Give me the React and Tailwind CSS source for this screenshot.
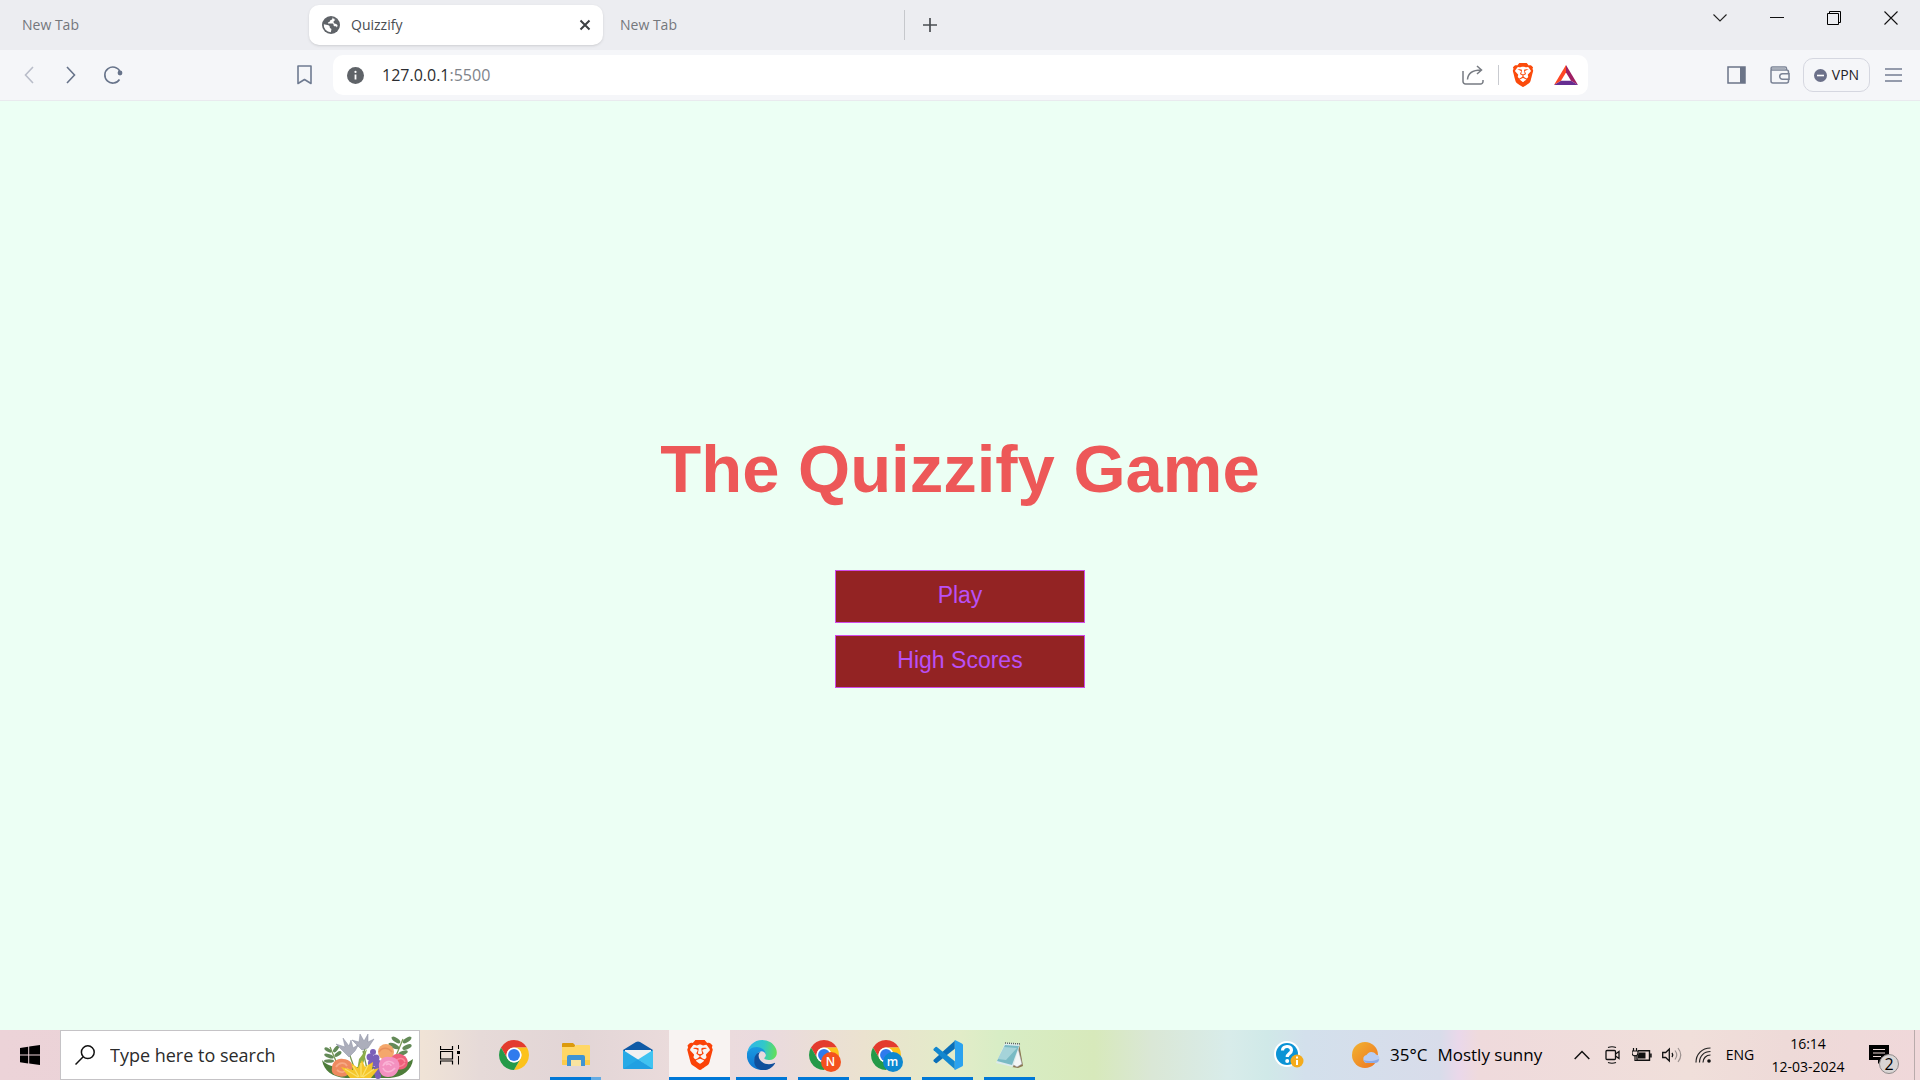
import React from "react";
import { SiBrave } from "react-icons/si";

function Svg({ w, h, vb, children, className }) {
  return (
    <svg width={w} height={h} viewBox={vb || `0 0 ${w} ${h}`} fill="none" className={className} aria-hidden="true">
      {children}
    </svg>
  );
}

/* ---------- Browser icons ---------- */

const Globe = () => (
  <Svg w={18} h={18}>
    <circle cx="9" cy="9" r="9" fill="#5f6368" />
    <path
      d="M10.4 1.6c.3 1.3-.2 2.2-1.4 2.3-.9.1-1.1.5-1.1 1.2 0 .8-.6 1.1-1.4 1.2-.8.1-.8.7-.3 1.3h3.9c1.1 0 1.5.7 1.5 1.7 0 .9.5 1 1.3 1 1.1 0 1.7.4 2 1.3A7.2 7.2 0 0 0 10.4 1.6Z"
      fill="#fff"
    />
    <path d="M10.4 1.6a7.4 7.4 0 0 1 5.9 8l-2.200-1.7-2.3-.7-.3-1.8 1.6-1.5Z" fill="#5f6368" />
    <path d="M1.8 8.2 5.5 9.1c1.4.3 2.3 1 2.3 2.1 0 .8.3 1.1 1 1.3.6.2.7.7.5 1.6l-.5 2.2a7.2 7.2 0 0 1-7-8.1Z" fill="#fff" />
  </Svg>
);

const Close = () => (
  <Svg w={12} h={12}>
    <path d="m1.5 1.5 9 9m0-9-9 9" stroke="#3c4043" strokeWidth="2" />
  </Svg>
);

const Plus = () => (
  <Svg w={16} h={16}>
    <path d="M8 1v14M1 8h14" stroke="#4a4d52" strokeWidth="1.7" />
  </Svg>
);

const Chevron = () => (
  <Svg w={14} h={8}>
    <path d="m.5.5 6.5 6.5L13.5.5" stroke="#222" strokeWidth="1.1" />
  </Svg>
);

const Minimize = () => (
  <Svg w={14} h={14}>
    <path d="M0 6.5h14" stroke="#111" />
  </Svg>
);

const Restore = () => (
  <Svg w={14} h={14}>
    <path d="M.5 2.5h11v11H.5zM2.5 2V.5h11v11H12" stroke="#000" />
  </Svg>
);

const WindowClose = () => (
  <Svg w={14} h={14}>
    <path d="m.5.5 13 13m0-13-13 13" stroke="#111" strokeWidth="1.1" />
  </Svg>
);

const Back = () => (
  <Svg w={10} h={18}>
    <path d="M9 1 1.5 9 9 17" stroke="#b9bdc9" strokeWidth="1.6" />
  </Svg>
);

const Forward = () => (
  <Svg w={10} h={18}>
    <path d="m1 1 7.5 8L1 17" stroke="#67738a" strokeWidth="1.6" />
  </Svg>
);

const Reload = () => (
  <Svg w={20} h={20}>
    <path d="M17 6.5A8 8 0 1 0 16.5 14.5" stroke="#67738a" strokeWidth="1.6" />
    <circle cx="17" cy="8" r="2.4" fill="#67738a" />
  </Svg>
);

const Bookmark = () => (
  <Svg w={15} h={20}>
    <path d="M1 1h13v17.500l-6.500-4-6.500 4Z" stroke="#6f7b91" strokeWidth="1.6" strokeLinejoin="round" />
  </Svg>
);

const Info = () => (
  <Svg w={17} h={17}>
    <circle cx="8.5" cy="8.5" r="8.5" fill="#5f6368" />
    <path d="M8.5 7.5v5" stroke="#fff" strokeWidth="1.8" />
    <circle cx="8.5" cy="4.9" r="1.1" fill="#fff" />
  </Svg>
);

const Share = () => (
  <Svg w={22} h={20}>
    <path d="M1 6v10.500A2.500 2.500 0 0 0 3.500 19h15a2.500 2.500 0 0 0 2.500-2.500V15" stroke="#777b82" strokeWidth="1.5" />
    <path d="M5.500 14.500C6 8 10 5 19 5m-4-4 4.500 4-4.500 4" stroke="#777b82" strokeWidth="1.5" />
  </Svg>
);

const Bat = () => (
  <Svg w={24} h={20}>
    <path d="M12 0 0 20l7-4.200 5-8.300Z" fill="#ff4724" />
    <path d="M12 0v7.500l5 8.300 7 4.200Z" fill="#9e1f63" />
    <path d="M0 20h24l-7-4.200H7Z" fill="#662d91" />
  </Svg>
);

const Sidebar = () => (
  <Svg w={19} h={18}>
    <path d="M1 1h17v16H1z" stroke="#6b7488" strokeWidth="1.5" />
    <path d="M13 1h5v16h-5z" fill="#6b7488" />
  </Svg>
);

const Wallet = () => (
  <Svg w={20} h={18}>
    <path
      d="M1 3.500V15a2 2 0 0 0 2 2h13.500a2 2 0 0 0 2-2V6a2 2 0 0 0-2-2H2.500C.6 4 .6 1 2.500 1H15a1.500 1.500 0 0 1 1.500 1.500V4"
      stroke="#7a8295"
      strokeWidth="1.500"
    />
    <path d="M2 2.500h13.500" stroke="#a9afbb" strokeWidth="2" />
    <path d="M19 7.700h-6.500a2.800 2.800 0 0 0 0 5.600H19z" fill="#f5f6f9" stroke="#7a8295" strokeWidth="1.500" />
  </Svg>
);

const VpnDot = () => (
  <Svg w={13} h={13}>
    <circle cx="6.5" cy="6.5" r="6.5" fill="#6b7089" />
    <path d="M3 6.5h7" stroke="#fff" strokeWidth="1.6" />
  </Svg>
);

const Menu = () => (
  <Svg w={17} h={14}>
    <path d="M0 1h17M0 7h17M0 13h17" stroke="#747d92" strokeWidth="1.4" />
  </Svg>
);

/* ---------- Taskbar icons ---------- */

const WindowsLogo = () => (
  <Svg w={20} h={20}>
    <path d="M0 2.9 8.2 1.700v7.800H0zM9.200 1.600 20 0v9.500H9.200zM0 10.500h8.200v7.900L0 17.200zM9.200 10.500H20V20L9.200 18.500z" fill="#000" />
  </Svg>
);

const Search = () => (
  <Svg w={20} h={20}>
    <circle cx="12.8" cy="7.2" r="6.4" stroke="#111" strokeWidth="1.5" />
    <path d="M8.2 11.8.5 19.5" stroke="#111" strokeWidth="1.5" />
  </Svg>
);

const Flowers = () => (
  <Svg w={94} h={46}>
    <path d="M1 27c2 11 10 17 24 18h44c13-1 22-8 23-19-8 6-16 8-24 8H25C15 35 6 33 1 27Z" fill="#4e7d3a" />
    <path d="M20 40 9 14m26 26L28 20m10 18L46 8m26 22L82 6M46 36l-4-18" stroke="#7c9b55" strokeWidth="1.300" />
    <g fill="#648a58">
      <ellipse cx="7" cy="17" rx="4" ry="1.800" transform="rotate(30 7 17)" />
      <ellipse cx="15" cy="16" rx="4" ry="1.800" transform="rotate(-50 15 16)" />
      <ellipse cx="8" cy="23" rx="5" ry="1.900" transform="rotate(20 8 23)" />
      <ellipse cx="17" cy="21" rx="4" ry="1.900" transform="rotate(-35 17 21)" />
      <ellipse cx="8" cy="28" rx="5" ry="1.800" />
      <ellipse cx="75" cy="7" rx="5" ry="2.200" transform="rotate(35 75 7)" />
      <ellipse cx="86" cy="7" rx="5" ry="2.200" transform="rotate(-35 86 7)" />
      <ellipse cx="73" cy="13" rx="6" ry="2.400" transform="rotate(25 73 13)" />
      <ellipse cx="86" cy="14" rx="5" ry="2.200" transform="rotate(-25 86 14)" />
      <ellipse cx="82" cy="20" rx="5" ry="2" transform="rotate(-20 82 20)" />
    </g>
    <g fill="#acaebb" stroke="#8b8ea3" strokeWidth=".5">
      <path d="M28 24 15 11l9 3-2-9 6 8 2-6 2 8 6-4-4 7Z" />
      <path d="M41 17 31 7l7 2 1-8 4 7 4-7v8l6-3-6 9Z" />
    </g>
    <path d="m36 38 2-12 8-10-3 12-4 10Z" fill="#8cae48" />
    <circle cx="65" cy="19" r="8" fill="#f4a76c" />
    <path d="M58 19c3-5 9-5 13 0" stroke="#e88f5c" strokeWidth="1.500" />
    <path d="M69 30c0-8 7-11 13-8 6 3 6 10 2 13-5 3-12 2-15-5Z" fill="#ef5f7b" />
    <path d="M75 28c3-4 8-3 9 1m-12 2c4 4 9 3 12-1" stroke="#f8899a" strokeWidth="1.500" />
    <path d="M11 35c0-6 5-10 11-9 7 0 11 5 9 11-2 5-8 8-14 6-5-1-7-4-6-8Z" fill="#ef8a5f" />
    <path d="M15 34c3-5 9-5 11-1m-10 4c4 4 9 2 11-2" stroke="#f7a985" strokeWidth="1.800" />
    <g fill="#7a5fb8">
      <circle cx="52" cy="19" r="3" />
      <circle cx="49" cy="24" r="3.500" />
      <circle cx="55" cy="25" r="3.500" />
      <circle cx="51" cy="30" r="4" />
      <circle cx="57" cy="31" r="4" />
      <circle cx="55" cy="38" r="4" />
      <circle cx="57" cy="43" r="3" />
    </g>
    <path d="M58 34c-1-6 4-11 10-10 7-1 12 5 10 11s-5 9-11 9-9-4-9-10Z" fill="#f391c0" />
    <path d="M62 33c2-5 8-6 11-2m-11 4c2 5 8 5 12 0m-9-3c2-2 5-1 5 1" stroke="#fab3d5" strokeWidth="1.700" />
    <path d="m20 34 12 3-2-7 7 5 4-8 3 7 8-5-1 8 7-2-8 10H29Z" fill="#f5c62a" />
    <path d="m24 36 13 8m-5-11 6 11m2-14v14m7-12-6 12m12-8-11 8" stroke="#fae06a" strokeWidth="1.300" />
  </Svg>
);

const TaskView = () => (
  <Svg w={20} h={20}>
    <path d="M.5 1v3.500h12V1M.5 19.500V16h12v3.500M.5 6.500h12v7.500H.5z" stroke="#000" strokeWidth="1.200" />
    <path d="M18.500 0v4M18.500 11v8.500" stroke="#000" />
    <path d="M17 6h3v3h-3z" fill="#000" />
  </Svg>
);

const Chrome = () => (
  <Svg w={30} h={30} vb="2 2 44 44">
    <path d="M4.950 13A22 22 0 0 1 43.050 13H24A11 11 0 0 0 14.470 29.500Z" fill="#e33b2e" />
    <path d="M43.050 13A22 22 0 0 1 24 46L33.530 29.500A11 11 0 0 0 24 13Z" fill="#fcc21b" />
    <path d="M24 46A22 22 0 0 1 4.950 13L14.470 29.500A11 11 0 0 0 33.530 29.500Z" fill="#249a48" />
    <circle cx="24" cy="24" r="11" fill="#fff" />
    <circle cx="24" cy="24" r="8.700" fill="#2f7bed" />
  </Svg>
);

const ProfileChrome = ({ letter, color }) => (
  <span className="relative block size-[30px]">
    <Chrome />
    <span className={`absolute -right-0.5 -bottom-0.5 flex size-5 items-center justify-center rounded-full text-xs leading-none font-semibold text-white ${color}`}>
      {letter}
    </span>
  </span>
);

const Explorer = () => (
  <Svg w={30} h={30}>
    <path d="M1 4a1 1 0 0 1 1-1h10l2 2v5H1Z" fill="#dc9a0c" />
    <path d="M1 7h12l2-2h13a1 1 0 0 1 1 1v19H2a1 1 0 0 1-1-1Z" fill="#ffd766" />
    <path d="M1 20h28v5H2a1 1 0 0 1-1-1Z" fill="#fbcb4a" />
    <path d="M6 26V17a2 2 0 0 1 2-2h14a2 2 0 0 1 2 2v9h-4v-6H10v6Z" fill="#3f94d4" />
    <path d="M10 20h10v6H10z" fill="#f9e3a0" />
  </Svg>
);

const Mail = () => (
  <Svg w={30} h={28}>
    <path d="M0 9 13 1q2-1 4 0l13 8v3H0Z" fill="#0f5aa6" />
    <path d="M2 9h26v8l-13 6L2 17Z" fill="#f1f1f1" />
    <path d="M0 9v18a1 1 0 0 0 1 1h28L15 18.500Z" fill="#27aae6" />
    <path d="M30 9 15 18.500 29 28a1 1 0 0 0 1-1Z" fill="#40c3f1" />
    <path d="M0 28h30L15 18.500Z" fill="#21a0e2" />
  </Svg>
);

const Edge = () => (
  <Svg w={30} h={30} vb="2 0 256 256">
    <defs>
      <linearGradient id="edgeTop" x1="0" y1=".4" x2="1" y2=".5">
        <stop offset="0" stopColor="#2fb4ea" />
        <stop offset=".55" stopColor="#31c8c9" />
        <stop offset="1" stopColor="#63df57" />
      </linearGradient>
      <linearGradient id="edgeBody" x1=".5" y1="0" x2=".5" y2="1">
        <stop offset="0" stopColor="#1b9de2" />
        <stop offset="1" stopColor="#0d72cf" />
      </linearGradient>
    </defs>
    <path
      d="M105.700 241.400a79.200 79.200 0 0 1-22.700-21.300 80.700 80.700 0 0 1 29.500-120c3.200-1.500 8.500-4.100 15.600-4a32.400 32.400 0 0 1 25.700 13 31.900 31.900 0 0 1 6.300 18.700c0-.2 24.500-79.600-80-79.600-43.900 0-80 41.600-80 78.200a130.200 130.200 0 0 0 12.100 56 128 128 0 0 0 156.400 67 75.500 75.500 0 0 1-62.800-8z"
      fill="url(#edgeBody)"
    />
    <path
      d="M235.700 195.500a93.700 93.700 0 0 1-10.600 4.700 101.900 101.900 0 0 1-35.900 6.400c-47.300 0-88.500-32.500-88.500-74.300a31.500 31.500 0 0 1 16.400-27.300c-42.800 1.800-53.800 46.400-53.800 72.500 0 74 68.100 81.400 82.800 81.400 7.900 0 19.800-2.300 27-4.600l1.300-.4a128.300 128.300 0 0 0 66.600-52.800 4 4 0 0 0-5.300-5.600z"
      fill="#104f9c"
    />
    <path
      d="M152.300 148.900c-.9 1-3.400 2.500-3.400 5.600 0 2.600 1.700 5.200 4.800 7.300 14.400 10.100 41.700 8.800 41.800 8.800a60.200 60.200 0 0 0 30.400-8.500 61.400 61.400 0 0 0 30.400-52.900c.3-22.400-8-37.300-11.300-43.900C224.300 23.900 179.600 0 131 0A128 128 0 0 0 3 126.200c.5-36.500 36.800-66 80-66 3.500 0 23.500.3 42 10a72.600 72.600 0 0 1 30.900 29.300c6.100 10.600 7.200 24.100 7.200 29.500s-2.700 13.300-7.800 19.900z"
      fill="url(#edgeTop)"
    />
  </Svg>
);

const VsCode = () => (
  <Svg w={30} h={30} vb="0 0 256 256">
    <path d="M186 6v69L33 196q-6 4-11 0L6 181q-6-6 0-13Z" fill="#0a6fb9" />
    <path d="M186 250v-69L33 60q-6-4-11 0L6 75q-6 6 0 13Z" fill="#1287cf" />
    <path d="M176 4q6-6 16-2l55 27q9 4 9 14v170q0 10-9 14l-55 27q-10 4-16-2 12 4 12-10V14Q188 0 176 4Z" fill="#2ba2ef" />
  </Svg>
);

const Notepad = () => (
  <Svg w={30} h={28}>
    <path d="m24 2 4 23-5 2-6-1Z" fill="#8b7750" />
    <path d="M22 3 27 23l-5 3-5-3Z" fill="#f4f6f6" stroke="#99a" strokeWidth=".5" />
    <path d="M10 2 25 3 18 26 1 22Z" fill="#dcebec" />
    <path d="M10 4 24 5 17 24 2 20Z" fill="#79bac4" />
    <path d="m9 6 13 1-11 12-8-1Z" fill="#c3e5e7" opacity=".6" />
    <path d="M10 2 26 3" stroke="#5d6262" strokeWidth="1.500" strokeDasharray="1 1" />
  </Svg>
);

const Help = () => (
  <Svg w={30} h={28}>
    <circle cx="13" cy="13" r="13" fill="#fff" />
    <circle cx="13" cy="13" r="11" fill="#0b93d5" />
    <path d="M8.500 9.500c0-5 9-5.500 9-.3 0 3.300-4.300 3.300-4.300 6.800" stroke="#fff" strokeWidth="3.200" />
    <circle cx="13.200" cy="20" r="2" fill="#fff" />
    <circle cx="23" cy="20" r="6.500" fill="#f4ab1c" />
    <path d="M23 19v5M23 15.500v2" stroke="#fff" strokeWidth="2" />
  </Svg>
);

const Weather = () => (
  <Svg w={28} h={26}>
    <defs>
      <linearGradient id="sun" x1="0" y1="0" x2="1" y2="1">
        <stop offset="0" stopColor="#f2b431" />
        <stop offset="1" stopColor="#ee7321" />
      </linearGradient>
    </defs>
    <circle cx="13" cy="13" r="13" fill="url(#sun)" />
    <path d="M15 21a4 4 0 0 1-.5-7.900A5.500 5.500 0 0 1 24 12.500a4.300 4.300 0 0 1-.5 8.500Z" fill="#b9cdf3" />
    <path d="M15 21a4 4 0 0 1-3.500-3c5 2 11 1 15.500-1a4.200 4.200 0 0 1-3.500 4Z" fill="#8eabe6" />
  </Svg>
);

const Up = () => (
  <Svg w={16} h={10}>
    <path d="m.7 9 7.300-7.500L15.300 9" stroke="#111" strokeWidth="1.500" />
  </Svg>
);

const Camera = () => (
  <Svg w={16} h={18}>
    <path d="M3 1.500q4-1.500 8 0M3 16.500q4 1.500 8 0" stroke="#111" strokeWidth="1.200" />
    <rect x="1" y="4.500" width="9.500" height="9" rx="1" stroke="#111" strokeWidth="1.300" />
    <path d="m10.500 8 3.500-2.500v7L10.500 10" stroke="#111" strokeWidth="1.300" />
  </Svg>
);

const Battery = () => (
  <Svg w={20} h={14}>
    <path d="M6 2.700h11.500v9.600H5V8M19 5.500v4" stroke="#111" strokeWidth="1.400" />
    <path d="M7 4.500h6.500v6H6V7Z" fill="#111" />
    <path d="M1.500 0v2.500M4.500 0v2.500M0 3h6v2a3 3 0 0 1-6 0ZM3 7v5.500h3" stroke="#111" strokeWidth="1.200" />
  </Svg>
);

const Volume = () => (
  <Svg w={20} h={16}>
    <path d="M.7 5.500h3L7.300 2v12L3.700 10.500h-3Z" stroke="#111" strokeWidth="1.300" />
    <path d="M10 6q1.500 2 0 4" stroke="#111" strokeWidth="1.300" />
    <path d="M13 3.500q3.500 4.500 0 9M16 1q5.500 7 0 14" stroke="#9b918f" strokeWidth="1.200" />
  </Svg>
);

const Wifi = () => (
  <Svg w={16} h={16}>
    <path d="M1 15.500C1 7 7 1 15.500 1M4.500 15.500C4.500 9 9 4.500 15.500 4.500M8 15.500c0-4 3-7.500 7.500-7.500" stroke="#222" strokeWidth="1.200" />
    <circle cx="14" cy="14" r="1.800" fill="#111" />
  </Svg>
);

const Notifications = () => (
  <Svg w={20} h={19}>
    <path d="M0 0h20v15h-7l-4 4v-4H0Z" fill="#000" />
    <path d="M4 4.500h12M4 8h12M4 11.500h8" stroke="#e9d6d4" strokeWidth="1.200" />
  </Svg>
);

const BraveIcon = ({ className }) => <SiBrave className={className} aria-hidden="true" />;

const apps = [
  { name: "Google Chrome", icon: <Chrome /> },
  { name: "File Explorer", icon: <Explorer />, open: true, stacked: true },
  { name: "Mail", icon: <Mail /> },
  { name: "Brave", icon: <BraveIcon className="size-[30px] text-[#fb4208]" />, open: true, active: true },
  { name: "Microsoft Edge", icon: <Edge />, open: true },
  { name: "Chrome profile N", icon: <ProfileChrome letter="N" color="bg-[#f4511e]" />, open: true },
  { name: "Chrome profile m", icon: <ProfileChrome letter="m" color="bg-[#0d88d0]" />, open: true },
  { name: "Visual Studio Code", icon: <VsCode />, open: true },
  { name: "Notepad", icon: <Notepad />, open: true },
];

function IconButton({ label, className, children }) {
  return (
    <button type="button" aria-label={label} className={`flex shrink-0 items-center justify-center ${className}`}>
      {children}
    </button>
  );
}

function TabStrip() {
  return (
    <div className="flex h-[50px] bg-[#ecedf1] text-sm text-[#74777c]">
      <div className="flex items-center" role="tablist" aria-label="Tabs">
        <button type="button" role="tab" className="h-10 w-[309px] pl-[22px] text-left">
          New Tab
        </button>
        <div className="flex h-10 w-[294px] items-center rounded-[10px] bg-white pr-3 pl-[13px] text-[#4a4d52] shadow-sm">
          <button type="button" role="tab" aria-selected="true" className="flex flex-1 items-center gap-[11px] text-left">
            <Globe />
            Quizzify
          </button>
          <IconButton label="Close tab" className="size-3">
            <Close />
          </IconButton>
        </div>
        <button type="button" role="tab" className="h-[30px] w-[302px] border-r border-[#c6c8cc] pl-[17px] text-left">
          New Tab
        </button>
        <IconButton label="New tab" className="size-[50px]">
          <Plus />
        </IconButton>
      </div>
      <div className="ml-auto flex h-9 pr-px">
        <IconButton label="Search tabs" className="w-[57px]"><Chevron /></IconButton>
        <IconButton label="Minimize" className="w-[57px]"><Minimize /></IconButton>
        <IconButton label="Restore" className="w-[57px]"><Restore /></IconButton>
        <IconButton label="Close window" className="w-[57px]"><WindowClose /></IconButton>
      </div>
    </div>
  );
}

function Toolbar() {
  return (
    <div className="flex h-[51px] items-center border-b border-[#e9eaee] bg-[#f5f6f9]">
      <div className="flex pl-2">
        <IconButton label="Back" className="size-[42px]"><Back /></IconButton>
        <IconButton label="Forward" className="size-[42px]"><Forward /></IconButton>
        <IconButton label="Reload" className="size-[42px]"><Reload /></IconButton>
      </div>
      <IconButton label="Bookmark this page" className="ml-[149px] h-10 w-[42px]"><Bookmark /></IconButton>
      <div className="ml-2 flex h-10 flex-1 items-center rounded-[10px] bg-white pr-[10px] pl-[14px]">
        <IconButton label="Site information" className="size-[17px]"><Info /></IconButton>
        <div className="relative ml-[18px] flex-1 text-base">
          <div aria-hidden="true" className="text-[#80838a]">
            <span className="text-[#2b2d31]">127.0.0.1</span>:5500
          </div>
          <input aria-label="Address" defaultValue="127.0.0.1:5500" className="absolute inset-0 w-full bg-transparent text-transparent caret-black outline-none" />
        </div>
        <IconButton label="Share" className="h-5 w-[22px]"><Share /></IconButton>
        <span className="ml-[14px] h-5 w-px bg-[#c9cbd0]" />
        <IconButton label="Brave Shields" className="ml-3 w-6"><BraveIcon className="size-6 text-[#fb4b0c]" /></IconButton>
        <IconButton label="Brave Rewards" className="ml-[19px] w-6"><Bat /></IconButton>
      </div>
      <div className="ml-[127px] flex items-center">
        <IconButton label="Sidebar" className="h-10 w-[43px]"><Sidebar /></IconButton>
        <IconButton label="Wallet" className="h-10 w-[43px]"><Wallet /></IconButton>
        <button type="button" className="ml-0.5 flex h-[34px] w-[67px] items-center justify-center gap-[5px] rounded-[10px] border border-[#d5d7e0] text-sm text-[#1f2126]">
          <VpnDot />
          VPN
        </button>
        <IconButton label="Menu" className="mr-1 h-10 w-[46px]"><Menu /></IconButton>
      </div>
    </div>
  );
}

function Taskbar() {
  return (
    <footer className="flex h-[50px] bg-[linear-gradient(90deg,#ecd3d8_0%,#ead2d6_15%,#f0e3d6_22%,#e6dad8_25%,#e2d5d6_30%,#ecdcdc_36%,#eadade_40%,#ebe2cf_45%,#e2ecc8_50%,#d8edc5_52%,#d7e9bb_57%,#dae7d6_60%,#d8ecea_64%,#d0e9e8_66%,#d3e0ec_68%,#d8dcea_75%,#ead8ea_76%,#efdadc_77%,#f0dfda_88%,#eedad8_93%,#f0d8da_100%)] text-black">
      <IconButton label="Start" className="w-[60px]"><WindowsLogo /></IconButton>
      <label className="flex w-[360px] items-center border border-[#c5c3c6] bg-white pl-[14px]">
        <Search />
        <input type="text" aria-label="Search" placeholder="Type here to search" className="ml-[15px] w-0 flex-1 text-lg outline-none placeholder:text-[#2b2b2b]" />
        <span className="mr-1 self-end"><Flowers /></span>
      </label>
      <IconButton label="Task View" className="w-[60px]"><TaskView /></IconButton>
      <div className="ml-[3px] flex gap-px">
        {apps.map((app) => (
          <button
            key={app.name}
            type="button"
            aria-label={app.name}
            className={`relative flex w-[61px] items-center justify-center ${app.active ? "bg-[#f8f3f2]" : ""}`}
          >
            {app.icon}
            {app.open && (
              <span className={`absolute bottom-0 flex h-[3px] bg-[#0078d7] ${app.active ? "inset-x-0" : "inset-x-[5px]"}`}>
                {app.stacked && <span className="ml-auto w-2.5 bg-[#64ace4]" />}
              </span>
            )}
          </button>
        ))}
      </div>
      <div className="ml-auto flex">
        <IconButton label="Help" className="mr-[38px] w-[30px]"><Help /></IconButton>
        <button type="button" className="flex w-[224px] items-center gap-[10px] pl-[10px] text-[17px]">
          <Weather />
          <span>35°C</span>
          <span>Mostly sunny</span>
        </button>
        <IconButton label="Show hidden icons" className="w-8"><Up /></IconButton>
        <IconButton label="Meet Now" className="w-[30px]"><Camera /></IconButton>
        <IconButton label="Battery" className="w-7"><Battery /></IconButton>
        <IconButton label="Volume" className="w-8"><Volume /></IconButton>
        <IconButton label="Network" className="w-[30px]"><Wifi /></IconButton>
        <button type="button" className="w-11 text-sm">ENG</button>
        <button type="button" className="flex w-[92px] flex-col items-center justify-center text-sm leading-[23px]">
          <span>16:14</span>
          <span>12-03-2024</span>
        </button>
        <button type="button" aria-label="Notifications" className="flex w-[60px] items-center justify-center">
          <span className="relative block h-5 w-[30px]">
            <Notifications />
            <span className="absolute top-[9px] right-0 flex size-5 items-center justify-center rounded-full border border-[#8f8b8b] bg-[#d9d5d4] text-base leading-none">
              2
            </span>
          </span>
        </button>
        <button type="button" aria-label="Show desktop" className="w-1.5 border-l border-[#b9abab]" />
      </div>
    </footer>
  );
}

export default function App() {
  return (
    <div className="flex min-h-screen flex-col font-['Open_Sans','Noto_Sans',sans-serif]">
      <header>
        <TabStrip />
        <Toolbar />
      </header>
      <main className="flex flex-1 flex-col items-center justify-center bg-[#ecfff4] font-['Liberation_Sans',Arial,sans-serif]">
        <h1 className="mb-16 text-[67px] leading-[75px] font-bold text-[#ed5858]">The Quizzify Game</h1>
        {["Play", "High Scores"].map((label) => (
          <a
            key={label}
            href="#"
            className="mb-3 flex h-[53px] w-[250px] items-center justify-center border border-[#d04be8] bg-[#932323] pb-0.5 text-[23px] text-[#b950f5]"
          >
            {label}
          </a>
        ))}
      </main>
      <Taskbar />
    </div>
  );
}
